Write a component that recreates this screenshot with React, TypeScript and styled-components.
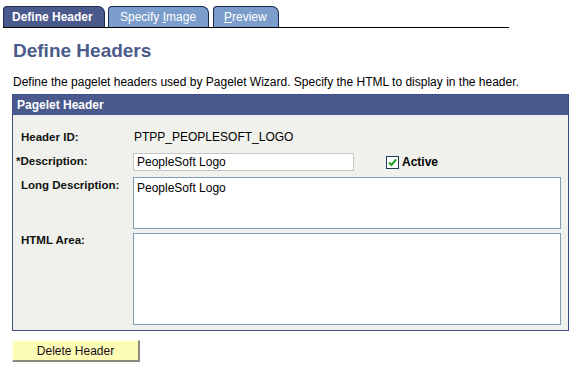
import React from "react";
import styled, { createGlobalStyle } from "styled-components";

const Global = createGlobalStyle`
  html, body { margin: 0; padding: 0; background: #ffffff; }
  body { font-family: "Liberation Sans", Arial, sans-serif; font-size: 12px; color: #000; }
`;

const Page = styled.div`
  width: 579px;
  height: 368px;
  overflow: hidden;
`;

const TabBar = styled.div`
  display: flex;
  align-items: flex-end;
  margin: 6px 0 0 3px;
  width: 506px;
  height: 21px;
  border-bottom: 1px solid #000;
`;

const Tab = styled.div<{ $active?: boolean; $w: number; $pl: number }>`
  box-sizing: border-box;
  width: ${(p) => p.$w}px;
  height: 21px;
  margin-right: ${(p) => (p.$active ? 3 : 4)}px;
  padding-left: ${(p) => p.$pl}px;
  display: flex;
  align-items: center;
  background: ${(p) => (p.$active ? "#4a5a8c" : "#7b9dcb")};
  border: 1px solid #1d2a4e;
  border-bottom: none;
  border-radius: 4px 7px 0 0;
  color: #ffffff;
  font-size: 12px;
  font-weight: ${(p) => (p.$active ? "bold" : "normal")};
  white-space: nowrap;
`;

const U = styled.span`
  text-decoration: underline;
`;

const Title = styled.h1`
  margin: 12px 0 0 13px;
  font-size: 19px;
  line-height: 22px;
  font-weight: bold;
  color: #4b5b8b;
`;

const Intro = styled.p`
  margin: 13px 0 0 13px;
  font-size: 12px;
  line-height: 14px;
  color: #000;
`;

const Panel = styled.section`
  box-sizing: border-box;
  margin: 5px 0 0 12px;
  width: 557px;
  border: 1px solid #3e4e86;
  background: #f0f1ec;
`;

const PanelHead = styled.div`
  height: 20px;
  background: #4a5a8c;
  color: #fff;
  font-weight: bold;
  font-size: 12px;
  line-height: 20px;
  padding-left: 4px;
`;

const PanelBody = styled.div`
  display: flex;
  flex-direction: column;
  padding: 15px 7px 5px 8px;
`;

const Row = styled.div<{ $mt: number; $h: number }>`
  display: grid;
  grid-template-columns: 112px 1fr;
  margin-top: ${(p) => p.$mt}px;
  height: ${(p) => p.$h}px;
  align-items: start;
`;

const Label = styled.div<{ $pt?: number }>`
  font-weight: bold;
  font-size: 11.5px;
  line-height: 14px;
  padding-top: ${(p) => p.$pt ?? 0}px;
  color: #111;
  white-space: nowrap;
`;

const Req = styled.span`
  margin-left: -5px;
`;

const Value = styled.div`
  font-size: 12px;
  line-height: 14px;
  padding-left: 1px;
`;

const FieldLine = styled.div`
  display: flex;
  align-items: center;
`;

const TextInput = styled.div`
  box-sizing: border-box;
  width: 221px;
  height: 18px;
  border: 1px solid #c6c6c6;
  background: #fff;
  padding: 1px 0 0 3px;
  font-size: 12px;
  line-height: 15px;
`;

const CheckWrap = styled.label`
  display: flex;
  align-items: center;
  margin-left: 32px;
  font-weight: bold;
  font-size: 12px;
  gap: 3px;
`;

const Box = styled.span`
  box-sizing: border-box;
  width: 13px;
  height: 13px;
  border: 1px solid #1c3c5c;
  background: #fff;
  display: inline-flex;
  align-items: center;
  justify-content: center;
  margin-top: 1px;
`;

const Area = styled.div<{ $h: number }>`
  box-sizing: border-box;
  width: 428px;
  height: ${(p) => p.$h}px;
  border: 1px solid #7f9db9;
  background: #fff;
  padding: 3px 0 0 3px;
  font-size: 12px;
  line-height: 14px;
`;

const Button = styled.button`
  box-sizing: border-box;
  margin: 9px 0 0 12px;
  width: 128px;
  height: 22px;
  background: #fdfcb5;
  border: 1px solid #fffff0;
  border-right: 2px solid #8a8a80;
  border-bottom: 2px solid #8a8a80;
  font-family: "Liberation Sans", Arial, sans-serif;
  font-size: 12px;
  color: #1a0a1a;
  padding: 0;
  text-align: center;
`;

export default function App() {
  return (
    <Page>
      <Global />
      <TabBar>
        <Tab $active $w={102} $pl={8}>Define Header</Tab>
        <Tab $w={101} $pl={11}>
          Specify&nbsp;<U>I</U>mage
        </Tab>
        <Tab $w={66} $pl={10}>
          <U>P</U>review
        </Tab>
      </TabBar>
      <Title>Define Headers</Title>
      <Intro>
        Define the pagelet headers used by Pagelet Wizard. Specify the HTML to display in the header.
      </Intro>
      <Panel>
        <PanelHead>Pagelet Header</PanelHead>
        <PanelBody>
          <Row $mt={0} $h={14}>
            <Label>Header ID:</Label>
            <Value>PTPP_PEOPLESOFT_LOGO</Value>
          </Row>
          <Row $mt={9} $h={18}>
            <Label $pt={1}>
              <Req>*</Req>Description:
            </Label>
            <FieldLine>
              <TextInput>PeopleSoft Logo</TextInput>
              <CheckWrap>
                <Box>
                  <svg width="9" height="9" viewBox="0 0 9 9">
                    <path d="M1 4.5 L3.5 7 L8 1.5" stroke="#21a121" strokeWidth="2" fill="none" />
                  </svg>
                </Box>
                Active
              </CheckWrap>
            </FieldLine>
          </Row>
          <Row $mt={6} $h={52}>
            <Label $pt={1}>Long Description:</Label>
            <Area $h={52}>PeopleSoft Logo</Area>
          </Row>
          <Row $mt={4} $h={92}>
            <Label $pt={0}>HTML Area:</Label>
            <Area $h={92} />
          </Row>
        </PanelBody>
      </Panel>
      <Button>Delete Header</Button>
    </Page>
  );
}
